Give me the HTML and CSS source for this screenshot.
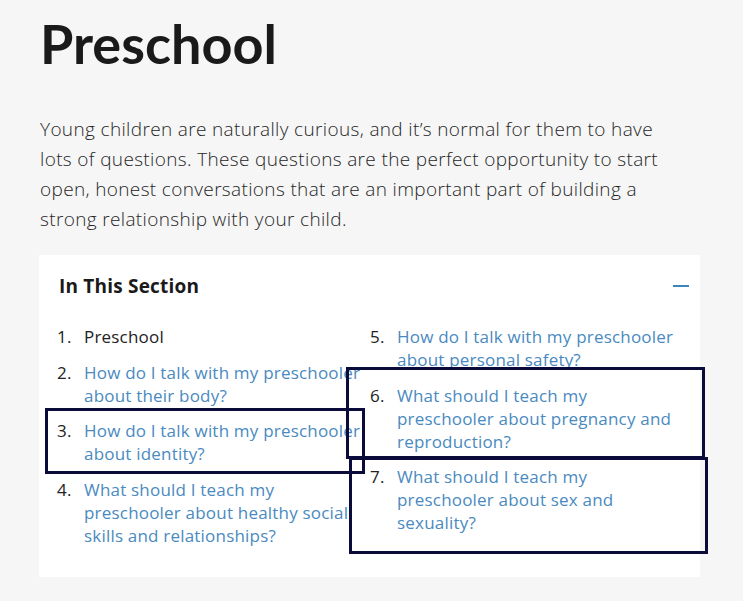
FILE: index.html
```html
<!DOCTYPE html>
<html>
<head>
<meta charset="utf-8">
<link rel="stylesheet" href="styles.css">
</head>
<body>
<main class="page">
  <h1 class="title">Preschool</h1>
  <p class="intro">Young children are naturally curious, and it’s normal for them to have lots of questions. These questions are the perfect opportunity to start open, honest conversations that are an important part of building a strong relationship with your child.</p>
  <section class="card">
    <div class="card-head">
      <h2 class="card-title">In This Section</h2>
      <span class="toggle" aria-hidden="true"></span>
    </div>
    <ol class="toc">
      <li class="current">Preschool</li>
      <li><a href="#">How do I talk with my preschooler about their body?</a></li>
      <li><a href="#">How do I talk with my preschooler about identity?</a></li>
      <li><a href="#">What should I teach my preschooler about healthy social skills and relationships?</a></li>
      <li><a href="#">How do I talk with my preschooler about personal safety?</a></li>
      <li><a href="#">What should I teach my preschooler about pregnancy and reproduction?</a></li>
      <li><a href="#">What should I teach my preschooler about sex and sexuality?</a></li>
    </ol>
  </section>
  <div class="mark mark-a"></div>
  <div class="mark mark-b"></div>
  <div class="mark mark-c"></div>
</main>
</body>
</html>
```
FILE: styles.css
```css
html, body {
  margin: 0;
  padding: 0;
  background: #f6f6f6;
}
body {
  font-family: "Open Sans", "Lato", sans-serif;
  color: #222;
}
.page {
  position: relative;
  padding: 0 43px 0 40px;
  height: 601px;
  overflow: hidden;
}
.title {
  margin: 0;
  padding-top: 14px;
  font-family: "Lato", sans-serif;
  font-size: 54px;
  line-height: 60px;
  font-weight: 700;
  color: #1a1a1a;
}
.intro {
  margin: 40px 0 0;
  font-size: 19px;
  line-height: 30px;
  font-weight: 300;
  letter-spacing: 0.35px;
  color: #262626;
  width: 635px;
}
.card {
  margin: 21px 0 0 -1px;
  width: 661px;
  background: #fff;
  box-sizing: border-box;
  padding: 18px 11px 18px 18px;
}
.card-head {
  display: flex;
  justify-content: space-between;
  align-items: center;
  height: 26px;
  padding-left: 2px;
}
.card-title {
  margin: 0;
  font-size: 19px;
  font-weight: 700;
  letter-spacing: 0.2px;
  color: #1a1a1a;
}
.toggle {
  width: 16px;
  height: 2px;
  background: #3d85b8;
}
.toc {
  margin: 26px 6px 0 0;
  padding: 0;
  list-style: none;
  counter-reset: item;
  columns: 2;
  column-gap: 0;
  font-size: 17px;
  letter-spacing: 0.2px;
  line-height: 23px;
}
.toc li {
  counter-increment: item;
  display: flex;
  break-inside: avoid;
  margin-bottom: 12.5px;
  padding-right: 4px;
}
.toc li::before {
  content: counter(item) ".";
  flex: 0 0 27px;
  color: #222;
}
.toc li:nth-child(5) {
  break-before: column;
}
.toc a {
  color: #4a8ac0;
  text-decoration: none;
}
.current {
  color: #222;
}
.mark {
  position: absolute;
  border: 3px solid #0b0b3b;
  box-sizing: border-box;
}
.mark-a { left: 45px; top: 408px; width: 320px; height: 66px; }
.mark-b { left: 346px; top: 367px; width: 359px; height: 92px; }
.mark-c { left: 349px; top: 457px; width: 359px; height: 97px; }
```
